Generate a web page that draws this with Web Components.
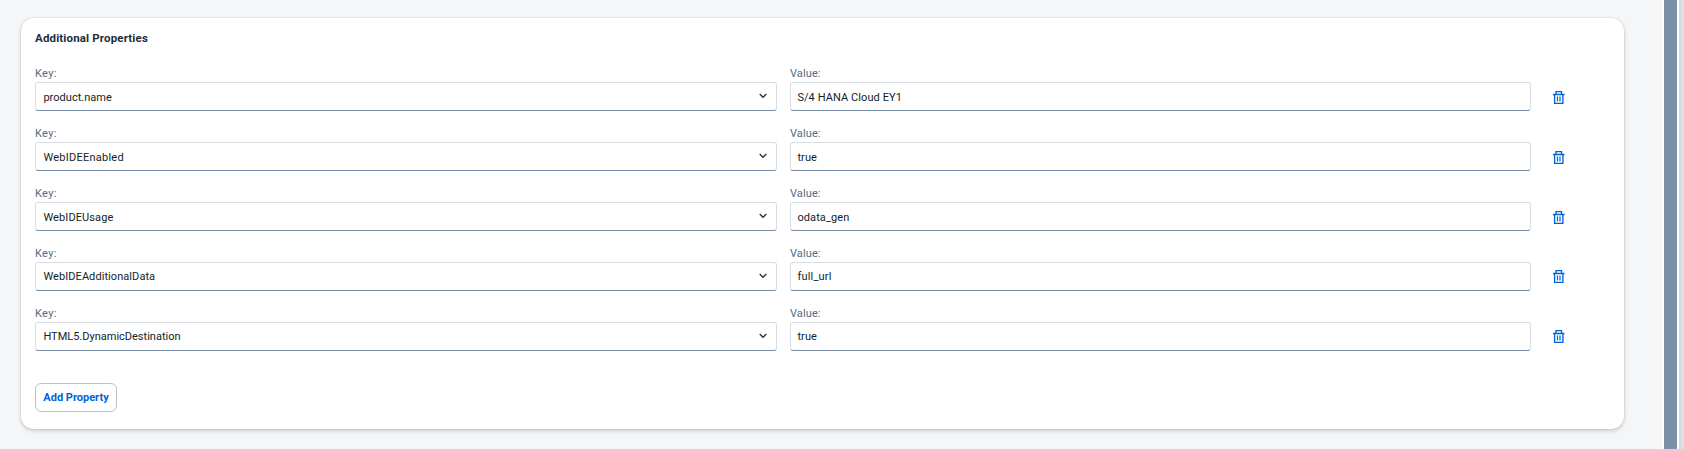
<!DOCTYPE html>
<html lang="en">
<head>
<meta charset="utf-8">
<title>Additional Properties</title>
<style>
html,body{margin:0;height:100%;overflow:hidden;background:#f5f6f7;font-family:Roboto,"Liberation Sans",sans-serif;font-size:11px;color:#131e29}
</style>
</head>
<body>
<property-page></property-page>
<script>
class Base extends HTMLElement {
  constructor() {
    super();
    this.attachShadow({mode: 'open'});
  }
  connectedCallback() { this.shadowRoot.innerHTML = this.render(); }
}
customElements.define('field-box', class extends Base {
  render() {
    const ls = this.getAttribute('spacing') || '0';
    return `<style>
      :host{display:flex;flex-direction:column;min-width:0}
      .label{height:16px;line-height:16px;color:#556b82;letter-spacing:var(--label-spacing,.35px);padding-top:2px}
      .box{box-sizing:border-box;height:29px;display:flex;align-items:center;justify-content:space-between;padding:1px 9.5px 0 var(--inset,7.4px);background:#fff;border:1px solid #d9dce3;border-bottom:1px solid #758ca4;border-radius:3px}
      .text{letter-spacing:${ls}px;white-space:nowrap;padding-bottom:var(--lift,0px)}
      svg{display:block;margin-top:-2px}
    </style>
    <div class="label">${this.getAttribute('label')}</div>
    <div class="box"><span class="text"><slot></slot></span>${this.hasAttribute('menu') ? '<svg width="8" height="6" viewBox="0 0 8 6"><path d="M.7 1 4 4.3 7.3 1" fill="none" stroke="#223548" stroke-width="1.3"/></svg>' : ''}</div>`;
  }
});
customElements.define('delete-button', class extends Base {
  render() {
    return `<style>
      :host{display:block;width:12px;height:14px}
      svg{display:block}
    </style>
    <svg width="12" height="14" viewBox="0 0 12 14" fill="none" stroke="#0064d9" stroke-width="1.35"><path d="M0 3.5H11.5M3 3V.6H8.5V3M1.6 3.5V12.4H9.9V3.5"/><path d="M4.5 5.5V10.5M7 5.5V10.5" stroke-width="1.2"/></svg>`;
  }
});
customElements.define('property-row', class extends Base {
  render() {
    const a = n => this.getAttribute(n);
    return `<style>
      :host{display:grid;grid-template-columns:742px 741px 12px;column-gap:13px;height:47px}
      .value{--inset:6.4px;--label-spacing:.1px}
      delete-button{margin:27px 0 0 9px}
      :host([lifted]) delete-button{margin-top:26px}
      :host([lifted]){--lift:2px}
    </style>
    <field-box label="Key:" menu spacing="${a('ks')}">${a('key')}</field-box>
    <field-box class="value" label="Value:" spacing="${a('vs')}">${a('value')}</field-box>
    <delete-button></delete-button>`;
  }
});
customElements.define('outline-button', class extends Base {
  render() {
    return `<style>
      :host{box-sizing:border-box;display:flex;align-items:center;justify-content:center;width:82px;height:29px;padding-bottom:1px;border:1px solid #bcc3ca;border-radius:6px;color:#0064d9;font-weight:700;background:#fff;white-space:nowrap}
    </style><slot></slot>`;
  }
});
customElements.define('property-card', class extends Base {
  render() {
    return `<style>
      :host{box-sizing:border-box;display:block;width:1603px;height:411px;margin:18px 0 0 21px;padding:12px 14px;background:#fff;border-radius:13px;box-shadow:0 0 2px rgba(34,53,72,.2),0 2px 4px rgba(34,53,72,.2)}
      h1{margin:0 0 18px;font-size:11.5px;line-height:16px;height:16px;font-weight:700;letter-spacing:.15px;color:#1d2d3e}
      .rows{display:grid;row-gap:13px}
      outline-button{margin-top:32px}
    </style>
    <h1>Additional Properties</h1>
    <div class="rows"><slot></slot></div>
    <outline-button>Add Property</outline-button>`;
  }
});
customElements.define('page-scrollbar', class extends Base {
  render() {
    return `<style>
      :host{display:grid;grid-template-columns:2px 13px 2px 5px;height:449px;background:#fff}
      .thumb{background:#7b91a8}
      .edge{grid-column:4;background:linear-gradient(90deg,#d2d7dc,#e0e4e8)}
    </style><div></div><div class="thumb"></div><div class="edge"></div>`;
  }
});
customElements.define('property-page', class extends Base {
  render() {
    return `<style>:host{display:flex;justify-content:space-between;height:449px;background:#f5f6f7}</style>
    <property-card>
      <property-row key="product.name" value="S/4 HANA Cloud EY1" ks="0.03" vs="0.08"></property-row>
      <property-row key="WebIDEEnabled" value="true" ks="0.25" vs="0.1"></property-row>
      <property-row key="WebIDEUsage" value="odata_gen" ks="0.1" vs="0.1"></property-row>
      <property-row key="WebIDEAdditionalData" value="full_url" ks="0.07" vs="0.2" lifted></property-row>
      <property-row key="HTML5.DynamicDestination" value="true" ks="0" vs="0.1" lifted></property-row>
    </property-card>
    <page-scrollbar></page-scrollbar>`;
  }
});
</script>
</body>
</html>
